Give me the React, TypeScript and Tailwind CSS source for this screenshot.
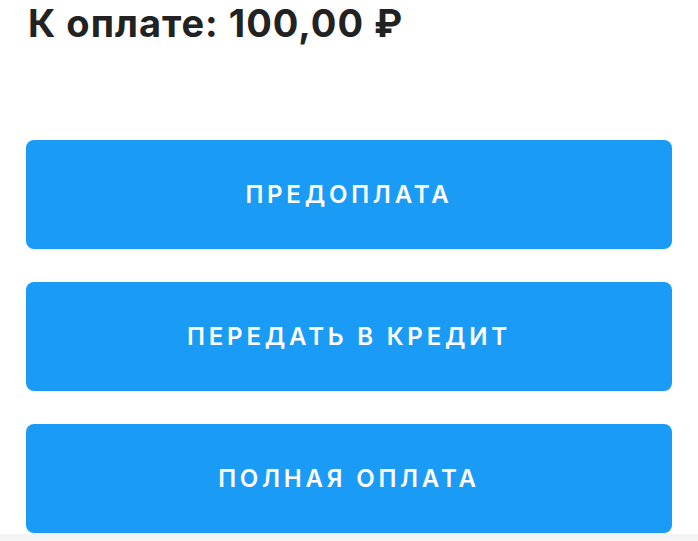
const options = ["ПРЕДОПЛАТА", "ПЕРЕДАТЬ В КРЕДИТ", "ПОЛНАЯ ОПЛАТА"];

export default function App() {
  return (
    <div className="h-[541px] w-[698px] overflow-hidden bg-white" style={{ fontFamily: "Inter, 'Noto Sans', sans-serif" }}>
      <div className="px-[26px]">
        <h1 className="pl-[2px] text-[38px] font-bold leading-[46px] tracking-[1px] text-[#222222]">
          К оплате: 100,00 ₽
        </h1>
        <div className="mt-[94px] flex flex-col gap-[33px]">
          {options.map((label) => (
            <button
              key={label}
              className="flex h-[109px] w-full items-center justify-center rounded-[8px] bg-[#1a9cf6] pt-[1px] text-[24px] font-semibold tracking-[3.8px] text-white"
            >
              {label}
            </button>
          ))}
        </div>
      </div>
      <div className="mt-[1px] h-[10px] bg-gradient-to-b from-[#f2f2f2] to-[#f7f7f7]" />
    </div>
  );
}
